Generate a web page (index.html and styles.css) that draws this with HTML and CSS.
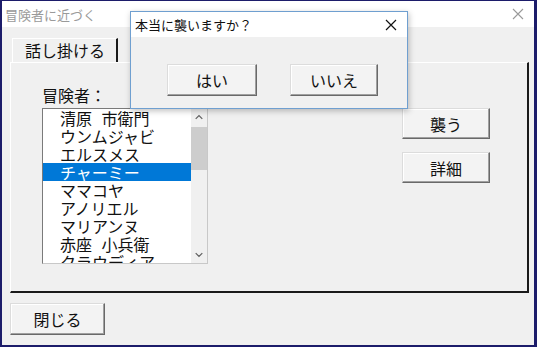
FILE: index.html
```html
<!DOCTYPE html>
<html lang="ja">
<head>
<meta charset="utf-8">
<link rel="stylesheet" href="styles.css">
</head>
<body>
<div class="window">
  <div class="titlebar">
    <span class="title">冒険者に近づく</span>
    <svg class="close" width="12" height="12" viewBox="0 0 12 12"><path d="M1 1L11 11M11 1L1 11" stroke="#9a9a9a" stroke-width="1.1" fill="none"/></svg>
  </div>
  <div class="client">
    <div class="tabs">
      <div class="tab">話し掛ける</div>
    </div>
    <div class="page">
      <div class="leftcol">
        <div class="label">冒険者：</div>
        <div class="listbox">
          <ul class="items">
            <li>清原 市衛門</li>
            <li>ウンムジャビ</li>
            <li>エルスメス</li>
            <li class="sel">チャーミー</li>
            <li>ママコヤ</li>
            <li>アノリエル</li>
            <li>マリアンヌ</li>
            <li>赤座 小兵衛</li>
            <li>クラウディア</li>
          </ul>
          <div class="scrollbar">
            <svg class="arrow" width="17" height="17" viewBox="0 0 17 17"><path d="M5 10L8.5 6.5L12 10" stroke="#606060" stroke-width="1.3" fill="none"/></svg>
            <div class="track"><div class="thumb"></div></div>
            <svg class="arrow" width="17" height="17" viewBox="0 0 17 17"><path d="M5 7L8.5 10.5L12 7" stroke="#606060" stroke-width="1.3" fill="none"/></svg>
          </div>
        </div>
      </div>
      <div class="rightcol">
        <button class="btn">襲う</button>
        <button class="btn">詳細</button>
      </div>
    </div>
    <button class="btn closebtn">閉じる</button>
  </div>

  <div class="dialog">
    <div class="dtitle">
      <span>本当に襲いますか？</span>
      <svg class="dclose" width="12" height="12" viewBox="0 0 12 12"><path d="M1 1L11 11M11 1L1 11" stroke="#111" stroke-width="1.2" fill="none"/></svg>
    </div>
    <div class="dbody">
      <button class="btn dbtn">はい</button>
      <button class="btn dbtn">いいえ</button>
    </div>
  </div>
</div>
</body>
</html>
```

FILE: styles.css
```css
* { box-sizing: border-box; }
html, body { margin: 0; padding: 0; }
body {
  width: 537px;
  height: 347px;
  overflow: hidden;
  font-family: "Noto Sans CJK JP", "Noto Sans", sans-serif;
  background: #f0f0f0;
}
.window {
  position: relative;
  width: 537px;
  height: 347px;
  background: #f0f0f0;
  border-top: 1px solid #1c1c6a;
  border-left: 2px solid #1c1c6a;
  border-right: 3px solid #1c1c6a;
  border-bottom: 2px solid #1c1c6a;
  display: flex;
  flex-direction: column;
}
.titlebar {
  height: 26px;
  background: #ffffff;
  display: flex;
  align-items: center;
  justify-content: space-between;
  padding: 0 10px 0 3px;
  flex: none;
}
.title {
  font-size: 13px;
  color: #9a9a9a;
  line-height: 1;
}
.client {
  flex: 1;
  display: flex;
  flex-direction: column;
  padding: 11px 0 0 8px;
}
.tabs {
  display: flex;
  height: 24px;
  padding-left: 2px;
}
.tab {
  width: 106px;
  height: 24px;
  border-left: 1px solid #ffffff;
  border-top: 1px solid #ffffff;
  border-right: 2px solid #1a1a1a;
  font-size: 16px;
  line-height: 22px;
  padding-left: 12px;
  color: #111;
  background: #f0f0f0;
}
.page {
  width: 519px;
  height: 231px;
  border-top: 1px solid #ffffff;
  border-left: 1px solid #ffffff;
  border-right: 2px solid #1a1a1a;
  border-bottom: 2px solid #1a1a1a;
  display: flex;
  padding: 20px 0 0 31px;
}
.leftcol {
  width: 166px;
  display: flex;
  flex-direction: column;
}
.label {
  font-size: 16px;
  line-height: 25px;
  color: #111;
  height: 25px;
}
.listbox {
  width: 166px;
  height: 156px;
  background: #fff;
  border: 1px solid #7a7a7a;
  border-right-color: #c8c8c8;
  border-bottom-color: #c8c8c8;
  display: flex;
  overflow: hidden;
}
.items {
  list-style: none;
  margin: 0;
  padding: 0;
  width: 148px;
  flex: none;
}
.items li {
  height: 18px;
  line-height: 18px;
  font-size: 16px;
  padding-left: 17px;
  color: #111;
  white-space: nowrap;
  word-spacing: 6px;
}
.items li.sel {
  background: #0078d7;
  color: #ffffff;
}
.scrollbar {
  width: 16px;
  background: #f0f0f0;
  display: flex;
  flex-direction: column;
  flex: none;
}
.arrow { display: block; width: 16px; height: 17px; flex: none; }
.track { flex: 1; padding-top: 1px; }
.thumb {
  width: 16px;
  height: 43px;
  background: #cdcdcd;
}
.rightcol {
  display: flex;
  flex-direction: column;
  gap: 13px;
  padding-top: 25px;
  margin-left: 194px;
}
.btn {
  font-family: "Noto Sans CJK JP", "Noto Sans", sans-serif;
  font-size: 16px;
  color: #111;
  background: #f3f3f3;
  border: 1px solid #dcdcdc;
  border-right-color: #696969;
  border-bottom-color: #696969;
  box-shadow: inset -1px -1px 0 #a0a0a0, inset 1px 1px 0 #ffffff;
  padding: 0;
  margin: 0;
  line-height: 1;
}
.rightcol .btn {
  width: 88px;
  height: 31px;
}
.closebtn {
  width: 95px;
  height: 32px;
  margin-top: 10px;
}
.dialog {
  position: absolute;
  left: 128px;
  top: 10px;
  width: 278px;
  height: 98px;
  border: 1px solid #6f9fd0;
  background: #f0f0f0;
  box-shadow: 1px 2px 6px rgba(0,0,0,0.25);
  display: flex;
  flex-direction: column;
}
.dtitle {
  height: 25px;
  background: #ffffff;
  display: flex;
  align-items: center;
  justify-content: space-between;
  padding: 0 10px 0 4px;
  font-size: 13px;
  color: #111;
  flex: none;
}
.dbody {
  display: flex;
  gap: 33px;
  padding: 27px 0 0 36px;
}
.dbtn { height: 32px; }
.dbtn:first-child { width: 90px; }
.dbtn:last-child { width: 88px; }
```
